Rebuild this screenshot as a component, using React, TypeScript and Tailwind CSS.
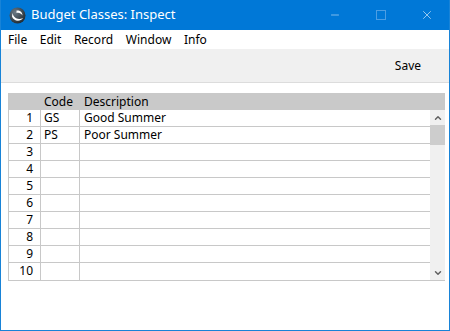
import { Minus, X, ChevronUp, ChevronDown } from "lucide-react";

const MENU = ["File", "Edit", "Record", "Window", "Info"];

const ROWS = [
  { n: 1, code: "GS", desc: "Good Summer" },
  { n: 2, code: "PS", desc: "Poor Summer" },
  ...Array.from({ length: 8 }, (_, i) => ({ n: i + 3, code: "", desc: "" })),
];

function AppLogo() {
  return (
    <svg width="17" height="17" viewBox="0 0 17 17" className="shrink-0">
      <defs>
        <radialGradient id="lg" cx="0.35" cy="0.3" r="0.8">
          <stop offset="0" stopColor="#6b7a86" />
          <stop offset="1" stopColor="#1c252c" />
        </radialGradient>
      </defs>
      <circle cx="8.5" cy="8.5" r="8" fill="url(#lg)" />
      <path d="M3.5 6 C4.5 11 9 13.5 14 11 C11.5 15 4.5 14.5 3 9.5 Z" fill="#fff" />
      <path d="M7.5 3.5 C10.5 3 13.5 5 13.5 8.5 C12 6.2 9.8 5.3 7.5 6 Z" fill="#fff" />
    </svg>
  );
}

export default function App() {
  return (
    <div
      className="w-[450px] h-[331px] flex flex-col bg-white border-x border-b border-[#1883d7] overflow-hidden text-[12px] text-black"
      style={{ fontFamily: '"Noto Sans", "Liberation Sans", sans-serif' }}
    >
      {/* title bar */}
      <div className="h-[30px] shrink-0 bg-[#0078d7] flex items-center -mx-px">
        <div className="pl-[9px] pr-[5px] flex items-center">
          <AppLogo />
        </div>
        <div className="flex-1 text-white text-[13px]">Budget Classes: Inspect</div>
        <div className="w-[46px] flex justify-center text-white">
          <Minus size={12} strokeWidth={1} />
        </div>
        <div className="w-[46px] flex justify-center">
          <div className="w-[10px] h-[10px] border border-[#4d9ee3]" />
        </div>
        <div className="w-[46px] flex justify-center text-white">
          <X size={14} strokeWidth={1} />
        </div>
      </div>

      {/* menu */}
      <div className="h-[19px] shrink-0 flex items-center pl-[7px] gap-[12.6px]">
        {MENU.map((m) => (
          <span key={m}>{m}</span>
        ))}
      </div>

      {/* toolbar */}
      <div className="h-[34px] shrink-0 bg-[#f0f0f0] border-b border-[#dcdcdc] flex items-center justify-end pr-[28px]">
        <span>Save</span>
      </div>

      {/* grid */}
      <div className="pl-[7px] pt-[10px]">
        <div className="w-[437px] border-l border-b border-[#c8c8c8]">
          <div className="h-[17px] bg-[#c9c9c9] flex items-center">
            <div className="w-[32px]" />
            <div className="w-[40px] pl-[3px]">Code</div>
            <div className="pl-[3px]">Description</div>
          </div>
          <div className="flex">
            <div className="w-[421px]">
              {ROWS.map((r) => (
                <div key={r.n} className="h-[17px] flex border-b border-[#c8c8c8] last:border-b-0">
                  <div className="w-[32px] border-r border-[#c8c8c8] text-right pr-[7px] leading-[16px]">{r.n}</div>
                  <div className="w-[39px] border-r border-[#c8c8c8] pl-[3px] leading-[16px]">{r.code}</div>
                  <div className="flex-1 pl-[4px] leading-[16px]">{r.desc}</div>
                </div>
              ))}
            </div>
            <div className="w-[15px] bg-[#f0f0f0] flex flex-col">
              <div className="h-[15px] flex items-center justify-center text-[#606060]">
                <ChevronUp size={10} strokeWidth={3.5} />
              </div>
              <div className="h-[20px] bg-[#cdcdcd]" />
              <div className="flex-1" />
              <div className="h-[15px] flex items-center justify-center text-[#606060]">
                <ChevronDown size={10} strokeWidth={3.5} />
              </div>
            </div>
          </div>
        </div>
      </div>
    </div>
  );
}
